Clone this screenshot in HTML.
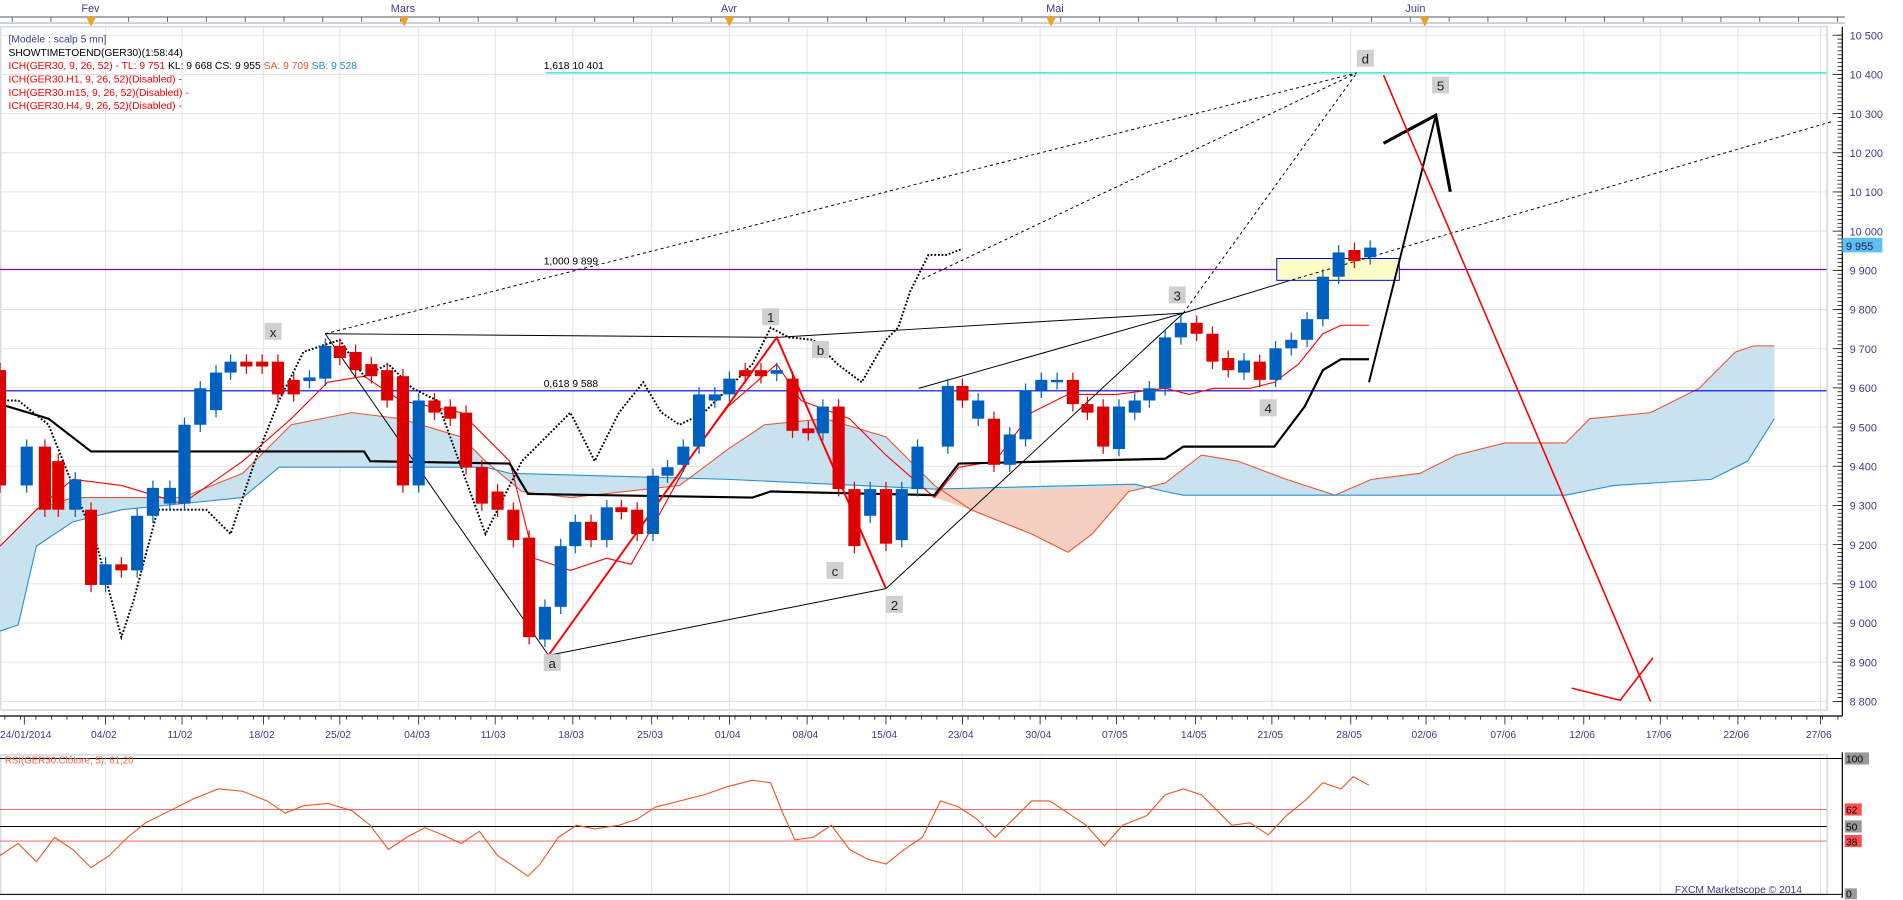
<!DOCTYPE html>
<html><head><meta charset="utf-8"><style>
html,body{margin:0;padding:0;background:#fff;overflow:hidden}
svg{display:block}
text{font-family:"Liberation Sans",Arial,sans-serif}
</style></head><body>
<svg id="s" width="1903" height="900" viewBox="0 0 1568 741.6" preserveAspectRatio="none" xmlns="http://www.w3.org/2000/svg">
<rect x="0" y="0" width="1568" height="741.6" fill="#fff"/>
<!-- top axis -->
<g fill="#3c3c8c" font-size="9">
<text x="67" y="10">Fev</text><text x="322" y="10">Mars</text><text x="594" y="10">Avr</text><text x="862" y="10">Mai</text><text x="1158" y="10">Juin</text>
</g>
<line x1="0" y1="14" x2="1520" y2="14" stroke="#555" stroke-width="0.8"/>
<line x1="0" y1="19" x2="1520" y2="19" stroke="#c8d0dc" stroke-width="1.5"/>
<g id="topticks" stroke="#555" stroke-width="0.7"></g>
<g fill="#f0a020"><path d="M71,14 L79,14 L75,22Z"/><path d="M329,14 L337,14 L333,22Z"/><path d="M597,14 L605,14 L601,22Z"/><path d="M862,14 L870,14 L866,22Z"/><path d="M1170,14 L1178,14 L1174,22Z"/></g>
<!-- main frame -->
<rect x="0.5" y="22" width="1505" height="563" fill="none" stroke="#d8dde5" stroke-width="1.5"/>
<g id="grid" stroke="#e2e2e2" stroke-width="0.8"></g>
<!-- cloud -->
<polygon id="cloud" fill="#c8e2f0"/>
<polygon fill="#f5d0c0" points="770,403 800,403 850,403 900,402 935,399 930,405 900,440 880,455 850,440 800,420 770,410"/>
<polyline id="sa" fill="none" stroke="#ee5533" stroke-width="0.9"/>
<polyline id="sb" fill="none" stroke="#2a90c8" stroke-width="0.9"/>
<!-- horizontals -->
<line x1="450" y1="60" x2="1505" y2="60" stroke="#00e5e5" stroke-width="1"/>
<line x1="0" y1="222" x2="1505" y2="222" stroke="#8000a0" stroke-width="0.9"/>
<line x1="0" y1="322" x2="1505" y2="322" stroke="#0000dd" stroke-width="0.9"/>
<rect x="1052" y="213" width="101" height="18" fill="#fdfdc8" stroke="#0000dd" stroke-width="0.8"/>
<g font-size="8.5" fill="#000"><text x="448" y="57">1,618 10 401</text><text x="448" y="218">1,000 9 899</text><text x="448" y="319">0,618 9 588</text></g>
<polyline id="tenkan" fill="none" stroke="#ff0000" stroke-width="0.9"/>
<polyline id="kijun" fill="none" stroke="#000" stroke-width="1.8"/>
<polyline id="chikou" fill="none" stroke="#000" stroke-width="1.6" stroke-dasharray="1.5,1.5"/>
<!-- pattern lines -->
<g stroke="#000" stroke-width="0.8" fill="none">
<line x1="268" y1="275" x2="452" y2="540"/><line x1="268" y1="275" x2="640" y2="278"/>
<line x1="452" y1="540" x2="730" y2="485"/><line x1="730" y1="485" x2="975" y2="258"/>
<line x1="640" y1="278" x2="975" y2="258"/><line x1="757" y1="320" x2="975" y2="258"/>
<line x1="975" y1="258" x2="1060" y2="232"/>
</g>
<g stroke="#000" stroke-width="0.8" fill="none" stroke-dasharray="2.5,2.5">
<line x1="268" y1="275" x2="1118" y2="60"/><line x1="760" y1="230" x2="1118" y2="60"/>
<line x1="975" y1="258" x2="1118" y2="60"/><line x1="1060" y1="232" x2="1510" y2="100"/>
</g>
<g stroke="#ff0000" stroke-width="1.6" fill="none"><polyline points="452,540 640,278 730,485"/></g>
<g id="candles"></g>
<!-- arrows -->
<g stroke="#000" stroke-width="1.6" fill="none"><polyline points="1128,315 1183,95"/></g>
<g stroke="#000" stroke-width="2.6" fill="none"><polyline points="1140,118 1183,95 1195,158"/></g>
<g stroke="#ff0000" stroke-width="1.3" fill="none"><line x1="1140" y1="62" x2="1360" y2="578"/><polyline points="1295,567 1335,577 1362,542"/></g>
<!-- labels -->
<g font-size="11" fill="#222">
<g id="lbls"></g>
</g>
<!-- legend -->
<g font-size="8.5">
<text x="7" y="35" fill="#3c3c8c">[Modèle : scalp 5 mn]</text>
<text x="7" y="46" fill="#000">SHOWTIMETOEND(GER30)(1:58:44)</text>
<text x="7" y="57" fill="#ff0000">ICH(GER30, 9, 26, 52) -  TL: 9 751 <tspan fill="#000">KL: 9 668  CS: 9 955</tspan> <tspan fill="#ee5533">SA: 9 709</tspan> <tspan fill="#2a90c8">SB: 9 528</tspan></text>
<text x="7" y="68" fill="#ff0000">ICH(GER30.H1, 9, 26, 52)(Disabled) -</text>
<text x="7" y="79" fill="#ff0000">ICH(GER30.m15, 9, 26, 52)(Disabled) -</text>
<text x="7" y="90" fill="#ff0000">ICH(GER30.H4, 9, 26, 52)(Disabled) -</text>
</g>
<!-- right axis -->
<line x1="1518" y1="22" x2="1518" y2="590" stroke="#000" stroke-width="1"/>
<g id="rticks" stroke="#000" stroke-width="0.6"></g>
<g id="plabels" font-size="9" fill="#3c3c8c"></g>
<rect x="1518" y="196" width="33" height="12" fill="#5bc0f0"/>
<text x="1521" y="206" font-size="9" fill="#1a1a60">9 955</text>
<!-- date axis -->
<line x1="0" y1="590" x2="1518" y2="590" stroke="#000" stroke-width="1"/>
<g id="dticks" stroke="#000" stroke-width="0.6"></g>
<g id="dlabels" font-size="8.5" fill="#3c3c8c"></g>
<!-- RSI -->
<rect x="0.5" y="622" width="1505" height="115" fill="none" stroke="#d8dde5" stroke-width="1.5"/>
<line x1="0" y1="625" x2="1518" y2="625" stroke="#000" stroke-width="0.8"/>
<line x1="0" y1="667" x2="1505" y2="667" stroke="#ff5050" stroke-width="0.7"/>
<line x1="0" y1="681" x2="1505" y2="681" stroke="#000" stroke-width="0.8"/>
<line x1="0" y1="693" x2="1505" y2="693" stroke="#ff5050" stroke-width="0.7"/>
<line x1="0" y1="737" x2="1518" y2="737" stroke="#000" stroke-width="0.8"/>
<line x1="1518" y1="620" x2="1518" y2="740" stroke="#000" stroke-width="1"/>
<text x="4" y="629" font-size="8" fill="#ff6040">RSI(GER30.Clôture, 5): 61,20</text>
<polyline id="rsi" fill="none" stroke="#ee5522" stroke-width="0.9"/>
<g font-size="8.5">
<rect x="1520" y="620" width="20" height="10" fill="#999"/><text x="1521" y="628.5" fill="#000">100</text>
<rect x="1520" y="662" width="14" height="10" fill="#ff5050"/><text x="1521" y="670.5" fill="#000">62</text>
<rect x="1520" y="676" width="14" height="10" fill="#999"/><text x="1521" y="684.5" fill="#000">50</text>
<rect x="1520" y="688" width="14" height="10" fill="#ff5050"/><text x="1521" y="696.5" fill="#000">38</text>
<rect x="1520" y="732" width="10" height="9" fill="#999"/><text x="1521" y="739.5" fill="#000">0</text>
</g>
<text x="1380" y="736" font-size="8.5" fill="#3c3c8c">FXCM Marketscope © 2014</text>
</svg>
<script>
var NS="http://www.w3.org/2000/svg";
function el(p,t,a,txt){var e=document.createElementNS(NS,t);for(var k in a)e.setAttribute(k,a[k]);if(txt!=null)e.textContent=txt;document.getElementById(p).appendChild(e);return e;}
function Y(p){return 29+(10500-p)*0.3229;}
// grid
var dx=[20,87,150,217,280,345,408,472,537,601,665,730,793,857,920,985,1048,1113,1175,1240,1305,1368,1432,1500];
var dl=["24/01/2014","04/02","11/02","18/02","25/02","04/03","11/03","18/03","25/03","01/04","08/04","15/04","23/04","30/04","07/05","14/05","21/05","28/05","02/06","07/06","12/06","17/06","22/06","27/06"];
for(var i=0;i<dx.length;i++){
 if(i>0){el("grid","line",{x1:dx[i],y1:22,x2:dx[i],y2:585});el("grid","line",{x1:dx[i],y1:622,x2:dx[i],y2:737});}
 el("dticks","line",{x1:dx[i],y1:590,x2:dx[i],y2:597});
 el("dlabels","text",{x:dx[i]-(i==0?20:12),y:608},dl[i]);
}
for(var x=4;x<1518;x+=12.8){el("dticks","line",{x1:x,y1:590,x2:x,y2:593});}
for(var x=10;x<1518;x+=32){el("topticks","line",{x1:x,y1:14,x2:x,y2:18});}
for(var p=8800;p<=10500;p+=100){var y=Y(p);el("grid","line",{x1:0,y1:y,x2:1505,y2:y});
 el("rticks","line",{x1:1510,y1:y,x2:1518,y2:y});
 el("plabels","text",{x:1524,y:y+3.5},(p>=10000?"10 "+String(p-10000).padStart(3,"0"):String(p)[0]+" "+String(p).slice(1)));}
for(var p=8800;p<=10500;p+=10){el("rticks","line",{x1:1514,y1:Y(p),x2:1518,y2:Y(p)});}
// candles [x,top,bottom,color]
var c=[[0,305,400,"r"],[22,368,400,"b"],[37,368,420,"r"],[48,380,420,"r"],[62,395,420,"b"],[75,420,482,"r"],[87,465,482,"b"],[100,465,470,"r"],[113,425,470,"b"],[126,402,425,"b"],[140,402,415,"b"],[152,350,415,"b"],[165,320,350,"b"],[178,307,338,"b"],[190,298,307,"b"],[203,298,302,"r"],[216,298,302,"r"],[229,298,325,"r"],[242,313,325,"r"],[255,311,314,"b"],[268,285,312,"b"],[280,285,295,"r"],[293,290,305,"r"],[306,300,310,"r"],[319,305,330,"r"],[332,310,400,"r"],[345,330,400,"b"],[358,330,340,"r"],[371,335,345,"r"],[384,340,385,"r"],[397,385,415,"r"],[410,405,420,"r"],[423,420,445,"r"],[436,443,525,"r"],[449,500,527,"b"],[462,450,500,"b"],[474,430,450,"b"],[487,430,445,"r"],[500,418,445,"b"],[512,418,422,"r"],[525,420,440,"r"],[538,392,440,"b"],[550,385,392,"b"],[563,368,383,"b"],[576,325,368,"b"],[589,325,330,"b"],[601,312,325,"b"],[614,305,310,"r"],[627,305,310,"r"],[640,305,308,"b"],[653,312,355,"r"],[666,353,357,"r"],[678,335,357,"b"],[691,335,403,"r"],[704,403,450,"r"],[717,403,425,"b"],[730,403,448,"r"],[743,403,445,"b"],[756,368,403,"b"],[781,318,368,"b"],[793,318,330,"r"],[806,330,345,"b"],[819,345,383,"r"],[832,358,383,"b"],[845,322,362,"b"],[858,313,322,"b"],[871,313,315,"b"],[884,313,333,"r"],[896,333,340,"r"],[909,335,368,"r"],[922,335,370,"b"],[935,330,340,"b"],[947,320,330,"b"],[960,278,320,"b"],[973,266,278,"b"],[986,266,275,"r"],[999,275,298,"r"],[1012,295,305,"r"],[1025,297,307,"b"],[1038,298,313,"r"],[1051,287,313,"b"],[1064,280,287,"b"],[1077,263,280,"b"],[1090,228,263,"b"],[1103,208,228,"b"],[1116,206,215,"r"],[1129,204,212,"b"]];
c.forEach(function(k){var col=k[3]=="r"?"#dd0000":"#0060c0";
 el("candles","line",{x1:k[0],y1:k[1]-6,x2:k[0],y2:k[2]+6,stroke:col,"stroke-width":1});
 el("candles","rect",{x:k[0]-5,y:k[1],width:10,height:Math.max(1.5,k[2]-k[1]),fill:col});});
// lines
function pts(a){var s=[];for(var i=0;i<a.length;i+=2)s.push(a[i]+","+a[i+1]);return s.join(" ");}
var SA=[0,450,30,420,60,410,150,410,200,390,240,350,290,340,330,345,380,360,400,380,430,405,470,410,560,400,600,370,630,350,680,345,730,360,770,400,800,420,850,440,880,455,900,440,930,405,960,398,990,375,1020,380,1060,395,1100,408,1130,395,1170,390,1200,375,1240,365,1290,365,1310,345,1360,340,1400,320,1430,290,1445,285,1462,285];
var SB=[0,520,15,515,30,450,60,430,100,420,150,415,200,410,230,385,400,385,420,390,600,395,770,403,935,399,960,405,975,408,1290,408,1330,400,1410,395,1440,380,1462,345];
document.getElementById("sa").setAttribute("points",pts(SA));
document.getElementById("sb").setAttribute("points",pts(SB));
var rev=[];for(var i=SB.length-2;i>=0;i-=2){rev.push(SB[i],SB[i+1]);}
document.getElementById("cloud").setAttribute("points",pts(SA.concat([1462,285,1462,345]).concat(rev)));
document.getElementById("kijun").setAttribute("points",pts([0,333,40,345,75,372,300,372,305,380,420,382,435,407,620,410,635,405,770,408,790,382,960,378,975,368,1050,368,1075,335,1090,305,1105,296,1128,296]));
document.getElementById("tenkan").setAttribute("points",pts([0,450,30,420,60,395,100,400,150,415,200,380,240,345,270,315,300,310,330,330,380,340,420,380,440,460,470,470,500,460,520,465,540,430,570,375,600,335,640,300,660,330,700,345,730,375,770,410,790,385,820,380,850,340,880,325,920,325,960,320,980,325,1000,320,1030,320,1050,315,1070,300,1090,275,1105,268,1128,268]));
document.getElementById("chikou").setAttribute("points",pts([0,330,15,330,40,350,60,400,80,450,100,525,110,495,130,420,150,420,170,420,190,440,210,380,230,330,250,290,280,280,300,310,320,300,340,320,360,330,380,385,400,440,410,420,430,380,450,360,470,340,490,380,510,340,530,315,545,340,560,350,580,340,600,320,620,300,635,270,650,278,670,280,690,300,710,315,730,280,740,270,750,240,765,210,780,210,793,205]));
document.getElementById("rsi").setAttribute("points",pts([0,705,15,695,30,710,45,690,60,700,75,715,90,705,105,690,120,678,140,668,160,658,180,650,200,652,220,660,235,670,250,664,270,662,290,668,305,680,320,700,335,690,350,682,365,688,380,695,395,685,410,705,425,715,435,722,445,712,460,690,475,680,490,683,510,680,525,675,540,665,560,660,580,655,600,648,620,643,635,645,645,670,655,692,670,690,685,680,700,700,715,708,730,712,745,700,760,690,775,660,790,665,805,675,820,690,835,675,850,660,865,660,880,670,895,680,910,697,925,680,945,672,960,655,975,650,990,655,1000,665,1015,680,1030,678,1045,688,1060,672,1075,660,1090,645,1105,650,1115,640,1128,647]));
// labels
[["x",225,273],["1",635,261],["b",676,288],["c",688,470],["2",737,498],["3",970,243],["4",1045,336],["d",1125,48],["5",1187,70],["a",455,546]].forEach(function(l){
 el("lbls","rect",{x:l[1]-7,y:l[2]-7,width:14,height:14,fill:"#d0d0d0"});
 el("lbls","text",{x:l[1],y:l[2]+4.5,"text-anchor":"middle"},l[0]);});
</script>
</body></html>
